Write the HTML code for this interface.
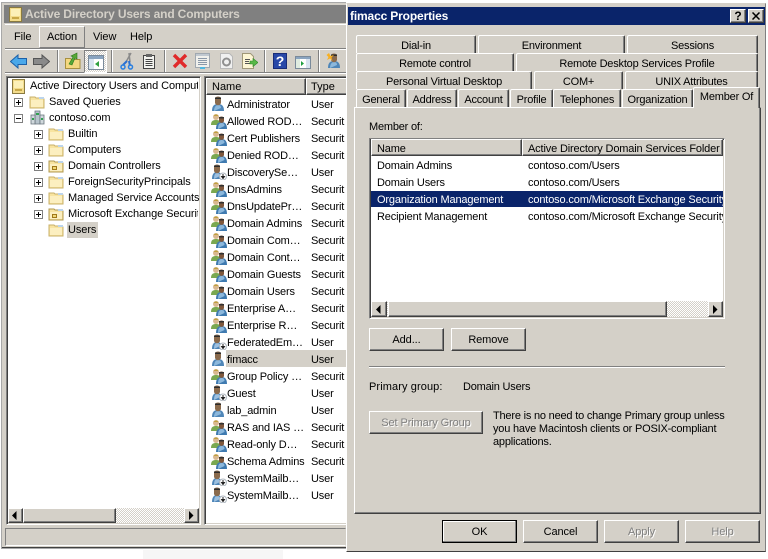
<!DOCTYPE html>
<html><head><meta charset="utf-8"><style>
html,body{margin:0;padding:0;background:#fff}
#p{position:relative;width:768px;height:559px;overflow:hidden;background:#fff;font:11px/13px "Liberation Sans",sans-serif;color:#000}
#p div,#p span,#p svg.a{position:absolute;white-space:nowrap}
.t{line-height:13px}
.g{background:#d4d0c8}
.r{border:1px solid;border-color:#fff #404040 #404040 #fff;box-sizing:border-box;background:#d4d0c8;box-shadow:inset -1px -1px 0 #808080}
.s{border:1px solid;border-color:#808080 #fff #fff #808080;box-sizing:border-box;box-shadow:inset 1px 1px 0 #404040,inset -1px -1px 0 #d4d0c8;background:#fff}
.b{text-align:center;line-height:23px;font-size:11px;letter-spacing:-.1px}
.tab{border:1px solid;border-color:#fff #404040 #d4d0c8 #fff;border-radius:2px 2px 0 0;border-bottom:0;box-shadow:inset -1px 0 0 #808080;box-sizing:border-box;height:18px;text-align:center;line-height:20px;font-size:11px;letter-spacing:-.2px;background:#d4d0c8}
.sep{width:1px;height:22px;background:#808080;box-shadow:1px 0 0 #fff;top:50px}
.tw{font-size:11px;letter-spacing:-.08px;margin-top:1px}
.d{letter-spacing:-.2px}
.dis{color:#808080;text-shadow:1px 1px 0 #fff}
.exp{width:9px;height:9px;border:1px solid #808080;box-sizing:border-box;background:#fff}
.exp:before{content:"";position:absolute;left:1px;top:3px;width:5px;height:1px;background:#000}
.pl:after{content:"";position:absolute;left:3px;top:1px;width:1px;height:5px;background:#000}
.hat{background-color:#fff;background-image:linear-gradient(45deg,#d4d0c8 25%,transparent 25%,transparent 75%,#d4d0c8 75%),linear-gradient(45deg,#d4d0c8 25%,transparent 25%,transparent 75%,#d4d0c8 75%);background-size:2px 2px;background-position:0 0,1px 1px}
.li{font-size:11px;height:17px;line-height:19px;letter-spacing:-.15px}
</style></head><body><div id="p">
<svg width="0" height="0" style="position:absolute"><defs>
<symbol id="f" viewBox="0 0 16 16"><path d="M1 3h5l1 1h7l1 1v9H1z" fill="#f8e4a0" stroke="#c8b06a" stroke-width="1"/><path d="M2 6h12v7H2z" fill="#fcefc0"/><path d="M10 3h5v2h-5z" fill="#bcd4ec"/></symbol>
<symbol id="fo" viewBox="0 0 16 16"><path d="M1 3h5l1 1h7l1 1v9H1z" fill="#f8e4a0" stroke="#b09850" stroke-width="1"/><path d="M2 6h12v7H2z" fill="#fcefc0"/><path d="M10 3h5v2h-5z" fill="#bcd4ec"/><path d="M4 8h5v4H4z" fill="#a07818"/><path d="M5 9h3v2H5z" fill="#f0d878"/></symbol>
<symbol id="u" viewBox="0 0 16 16"><path d="M2 15c0-5 2-7 6-7s6 2 6 7z" fill="#4f86b8"/><path d="M4 15c0-4 2-6 4-6s3 1 3 3z" fill="#8cb8dc"/><path d="M5 2c1-2 5-2 6 0v5c-1 3-5 3-6 0z" fill="#8a6a4c"/><path d="M5 3h6V1.500H5z" fill="#2c2c2c"/></symbol>
<symbol id="uq" viewBox="0 0 16 16"><path d="M1 15c0-5 2-7 5-7s5 2 5 7z" fill="#4f86b8"/><path d="M3 15c0-4 1-6 3-6s3 1 3 3z" fill="#9cc0e0"/><path d="M3 2c1-2 5-2 6 0v5c-1 3-5 3-6 0z" fill="#8a6a4c"/><path d="M3 3h6V1.500H3z" fill="#2c2c2c"/><circle cx="12" cy="12.500" r="3.500" fill="#fff" stroke="#b0b8c0"/><path d="M12 10v3M10.500 12.500l1.500 2 1.500-2z" stroke="#222" fill="#222"/></symbol>
<symbol id="gr" viewBox="0 0 18 16"><circle cx="6" cy="4" r="3" fill="#d8b890"/><path d="M1 12c0-4 2-5 5-5s5 1 5 5z" fill="#7aa850"/><path d="M3.500 3c1-2 4-2 5 0z" fill="#c0a040"/><path d="M6 16c0-5 2-7 5.500-7s5.500 2 5.500 7z" fill="#3f7ab0"/><path d="M8 16c0-4 1-6 3.500-6s3 1 3 3z" fill="#8cb8dc"/><path d="M9 5c.5-2 4.500-2 5 0v3c-.5 2.500-4.500 2.500-5 0z" fill="#80583c"/><path d="M9 5.500h5V4H9z" fill="#333"/></symbol>
</defs></svg>

<!-- main window -->
<div class="g" style="left:1px;top:2px;width:345px;height:547px;border:1px solid #a8a8a8;border-width:1px 0 1px 1px;box-sizing:border-box;box-shadow:inset 0 -1px 0 #404040"></div>
<div style="left:4px;top:5px;width:342px;height:18px;background:#808080"></div>
<svg class="a" style="left:9px;top:7px" width="13" height="15" viewBox="0 0 13 15"><path d="M.5.500h12v14H.5z" fill="#f3dc8c" stroke="#8a7a40"/><path d="M2 2h9v7H2z" fill="#fcf0b8"/><path d="M3 10h7v2H3z" fill="#c8a848"/></svg>
<span class="t" style="left:25px;top:7px;font-size:12px;font-weight:bold;color:#d4d0c8;line-height:15px;letter-spacing:-.15px">Active Directory Users and Computers</span>
<div style="left:5px;top:24px;width:341px;height:1px;background:#fff"></div>
<div style="left:39px;top:26px;width:46px;height:22px;border:1px solid;border-color:#fff #808080 #808080 #fff;box-sizing:border-box"></div>
<span class="tw" style="left:14px;top:30px">File</span>
<span class="tw" style="left:47px;top:30px">Action</span>
<span class="tw" style="left:93px;top:30px">View</span>
<span class="tw" style="left:130px;top:30px">Help</span>
<div style="left:5px;top:48px;width:341px;height:1px;background:#808080;box-shadow:0 1px 0 #fff"></div>
<div style="left:5px;top:72px;width:341px;height:1px;background:#808080;box-shadow:0 1px 0 #fff"></div>
<!-- toolbar -->
<svg class="a" style="left:10px;top:53px" width="17" height="17" viewBox="0 0 17 17"><path d="M.5 8.500 8 2v3.500h8.500v6H8V15z" fill="#4aa8ea" stroke="#1c60a8"/></svg>
<svg class="a" style="left:33px;top:53px" width="17" height="17" viewBox="0 0 17 17"><path d="M16.500 8.500 9 2v3.500H.5v6H9V15z" fill="#8a8a8a" stroke="#555"/></svg>
<div class="sep" style="left:57px"></div>
<svg class="a" style="left:65px;top:52px" width="16" height="18" viewBox="0 0 16 18"><path d="M.5 6.500h5l1 1h8.500v9H.5z" fill="#f4d880" stroke="#a89040"/><path d="M4 12 8 5l-2-1 6-3v6l-2-1-3 7z" fill="#58a838" stroke="#2c7a1c" stroke-width=".6"/></svg>
<div class="hat" style="left:84px;top:50px;width:23px;height:23px;border:1px solid;border-color:#808080 #fff #fff #808080;box-sizing:border-box"></div>
<svg class="a" style="left:88px;top:55px" width="16" height="15" viewBox="0 0 16 15"><path d="M.5.500h15v14H.5z" fill="#fff" stroke="#7a8a9a"/><path d="M1 1h14v3H1z" fill="#8aa4c0"/><path d="M1 4h5v10H1z" fill="#d8e4f0"/><path d="M11 6v6L7 9z" fill="#30a040"/></svg>
<div class="sep" style="left:111px"></div>
<svg class="a" style="left:120px;top:52px" width="14" height="18" viewBox="0 0 14 18"><path d="M11 1 6 10M9 1l1 9" stroke="#8a8a8a" stroke-width="1.500" fill="none"/><path d="M7 9 3 13" stroke="#2a6fd0" stroke-width="2"/><path d="M9 9l1 5" stroke="#2a6fd0" stroke-width="2"/><circle cx="3" cy="15" r="2" fill="none" stroke="#2a7fe0" stroke-width="1.500"/><circle cx="10.500" cy="15" r="2" fill="none" stroke="#2a7fe0" stroke-width="1.500"/></svg>
<svg class="a" style="left:143px;top:53px" width="12" height="16" viewBox="0 0 12 16"><path d="M.5 2.500h11v13H.5z" fill="#f4f4f0" stroke="#444"/><path d="M3 1h6v3H3z" fill="#666"/><path d="M2.500 6.500h7M2.500 8.500h7M2.500 10.500h7M2.500 12.500h7" stroke="#444"/></svg>
<div class="sep" style="left:164px"></div>
<svg class="a" style="left:172px;top:53px" width="16" height="16" viewBox="0 0 16 16"><path d="M2 2l12 12M14 2 2 14" stroke="#e02a2a" stroke-width="3.400"/></svg>
<svg class="a" style="left:195px;top:53px" width="15" height="16" viewBox="0 0 15 16"><path d="M.5.500h14v14H.5z" fill="#f0f0ec" stroke="#a0a8b0"/><path d="M1 1h13v2H1z" fill="#c0c8d0"/><path d="M3 5.500h9M3 7.500h9M3 9.500h9M3 11.500h9" stroke="#8a98a8"/><path d="M5 14h5v2H5z" fill="#50b8e0"/></svg>
<svg class="a" style="left:220px;top:53px" width="13" height="16" viewBox="0 0 13 16"><path d="M.5.500h9l3 3v12H.5z" fill="#f0f0f0" stroke="#b8b8b8"/><circle cx="6.500" cy="9" r="3.500" fill="none" stroke="#909090" stroke-width="2"/></svg>
<svg class="a" style="left:242px;top:53px" width="16" height="16" viewBox="0 0 16 16"><path d="M.5.500h8l3 3v12H.5z" fill="#fdf6d4" stroke="#a09878"/><path d="M3 6.500h5M3 8.500h4M3 10.500h5" stroke="#555"/><path d="M8 8h3V5.500l5 4-5 4V11H8z" fill="#58b848" stroke="#2c8a28" stroke-width=".6"/></svg>
<div class="sep" style="left:264px"></div>
<div style="left:273px;top:53px;width:14px;height:16px;background:#2848a8;border:1px solid #182c78;box-sizing:border-box;color:#fff;font:bold 14px/14px 'Liberation Sans',sans-serif;text-align:center">?</div>
<svg class="a" style="left:295px;top:56px" width="16" height="13" viewBox="0 0 16 13"><path d="M.5.500h15v12H.5z" fill="#fff" stroke="#7a8a9a"/><path d="M1 1h14v2H1z" fill="#8aa4c0"/><path d="M1 3h4v9H1z" fill="#e0ece0"/><path d="M11 3h4v9h-4z" fill="#d8e4f0"/><path d="M6 5v5l3-2.500z" fill="#20a040"/></svg>
<div class="sep" style="left:318px"></div>
<svg class="a" style="left:326px;top:52px" width="16" height="18"><use href="#u" width="16" height="18"/><path d="M3 1 4.500 4 8 3 5.500 5.500 6.500 9 4 6.500 1 8 2.500 5 .5 3z" fill="#f8b020"/></svg>

<!-- tree -->
<div class="s" style="left:6px;top:76px;width:195px;height:449px"></div>
<svg class="a" style="left:12px;top:79px" width="13" height="15" viewBox="0 0 13 15"><path d="M.5.500h12v14H.5z" fill="#f3dc8c" stroke="#8a7a40"/><path d="M2 2h9v7H2z" fill="#fcf0b8"/><path d="M3 10h7v2H3z" fill="#c8a848"/></svg>
<span class="tw" style="left:30px;top:79px;width:168px;overflow:hidden">Active Directory Users and Computers</span>
<div class="exp pl" style="left:14px;top:98px"></div><svg class="a" style="left:29px;top:94px" width="16" height="16"><use href="#f"/></svg><span class="tw" style="left:49px;top:95px">Saved Queries</span>
<div class="exp" style="left:14px;top:114px"></div>
<svg class="a" style="left:30px;top:110px" width="15" height="15" viewBox="0 0 15 15"><path d="M5 1h5v13H5z" fill="#b8c4cc" stroke="#68747c" stroke-width=".8"/><path d="M1 5h4v9H1zM10 5h4v9h-4z" fill="#d0d8dc" stroke="#68747c" stroke-width=".8"/><path d="M6 3h3v2H6zM2 8h2v2H2zM11 8h2v2h-2z" fill="#30a050"/></svg>
<span class="tw" style="left:49px;top:111px">contoso.com</span>
<div class="exp pl" style="left:34px;top:130px"></div><svg class="a" style="left:48px;top:126px" width="16" height="16"><use href="#f"/></svg><span class="tw" style="left:68px;top:127px">Builtin</span>
<div class="exp pl" style="left:34px;top:146px"></div><svg class="a" style="left:48px;top:142px" width="16" height="16"><use href="#f"/></svg><span class="tw" style="left:68px;top:143px">Computers</span>
<div class="exp pl" style="left:34px;top:162px"></div><svg class="a" style="left:48px;top:158px" width="16" height="16"><use href="#fo"/></svg><span class="tw" style="left:68px;top:159px">Domain Controllers</span>
<div class="exp pl" style="left:34px;top:178px"></div><svg class="a" style="left:48px;top:174px" width="16" height="16"><use href="#f"/></svg><span class="tw" style="left:68px;top:175px">ForeignSecurityPrincipals</span>
<div class="exp pl" style="left:34px;top:194px"></div><svg class="a" style="left:48px;top:190px" width="16" height="16"><use href="#f"/></svg><span class="tw" style="left:68px;top:191px">Managed Service Accounts</span>
<div class="exp pl" style="left:34px;top:210px"></div><svg class="a" style="left:48px;top:206px" width="16" height="16"><use href="#fo"/></svg><span class="tw" style="left:68px;top:207px;width:130px;overflow:hidden">Microsoft Exchange Security Groups</span>
<svg class="a" style="left:48px;top:222px" width="16" height="16"><use href="#f"/></svg>
<div class="g" style="left:67px;top:222px;width:31px;height:16px"></div><span class="tw" style="left:68px;top:223px">Users</span>
<!-- tree scrollbar -->
<div class="hat" style="left:8px;top:508px;width:191px;height:15px"></div>
<div class="r" style="left:8px;top:508px;width:15px;height:15px"></div><svg class="a" style="left:12px;top:511px" width="5" height="9"><path d="M4.500 0v9L0 4.500z"/></svg>
<div class="r" style="left:23px;top:508px;width:93px;height:15px"></div>
<div class="r" style="left:184px;top:508px;width:15px;height:15px"></div><svg class="a" style="left:189px;top:511px" width="5" height="9"><path d="M0 0v9l4.500-4.500z"/></svg>

<!-- list -->
<div class="s" style="left:204px;top:76px;width:145px;height:449px"></div>
<div class="r" style="left:206px;top:78px;width:100px;height:17px;line-height:17px;font-size:11px;padding-left:5px">Name</div>
<div class="r" style="left:306px;top:78px;width:42px;height:17px;line-height:17px;font-size:11px;padding-left:4px">Type</div>
<div class="g" style="left:226px;top:350px;width:120px;height:17px"></div>

<svg class="a" style="left:210px;top:96px" width="16" height="16"><use href="#u"/></svg><span class="li" style="left:227px;top:96px">Administrator</span><span class="li" style="left:311px;top:96px">User</span>
<svg class="a" style="left:210px;top:113px" width="18" height="16"><use href="#gr"/></svg><span class="li" style="left:227px;top:113px">Allowed ROD…</span><span class="li" style="left:311px;top:113px">Securit</span>
<svg class="a" style="left:210px;top:130px" width="18" height="16"><use href="#gr"/></svg><span class="li" style="left:227px;top:130px">Cert Publishers</span><span class="li" style="left:311px;top:130px">Securit</span>
<svg class="a" style="left:210px;top:147px" width="18" height="16"><use href="#gr"/></svg><span class="li" style="left:227px;top:147px">Denied ROD…</span><span class="li" style="left:311px;top:147px">Securit</span>
<svg class="a" style="left:211px;top:164px" width="16" height="16"><use href="#uq"/></svg><span class="li" style="left:227px;top:164px">DiscoverySe…</span><span class="li" style="left:311px;top:164px">User</span>
<svg class="a" style="left:210px;top:181px" width="18" height="16"><use href="#gr"/></svg><span class="li" style="left:227px;top:181px">DnsAdmins</span><span class="li" style="left:311px;top:181px">Securit</span>
<svg class="a" style="left:210px;top:198px" width="18" height="16"><use href="#gr"/></svg><span class="li" style="left:227px;top:198px">DnsUpdatePr…</span><span class="li" style="left:311px;top:198px">Securit</span>
<svg class="a" style="left:210px;top:215px" width="18" height="16"><use href="#gr"/></svg><span class="li" style="left:227px;top:215px">Domain Admins</span><span class="li" style="left:311px;top:215px">Securit</span>
<svg class="a" style="left:210px;top:232px" width="18" height="16"><use href="#gr"/></svg><span class="li" style="left:227px;top:232px">Domain Com…</span><span class="li" style="left:311px;top:232px">Securit</span>
<svg class="a" style="left:210px;top:249px" width="18" height="16"><use href="#gr"/></svg><span class="li" style="left:227px;top:249px">Domain Cont…</span><span class="li" style="left:311px;top:249px">Securit</span>
<svg class="a" style="left:210px;top:266px" width="18" height="16"><use href="#gr"/></svg><span class="li" style="left:227px;top:266px">Domain Guests</span><span class="li" style="left:311px;top:266px">Securit</span>
<svg class="a" style="left:210px;top:283px" width="18" height="16"><use href="#gr"/></svg><span class="li" style="left:227px;top:283px">Domain Users</span><span class="li" style="left:311px;top:283px">Securit</span>
<svg class="a" style="left:210px;top:300px" width="18" height="16"><use href="#gr"/></svg><span class="li" style="left:227px;top:300px">Enterprise A…</span><span class="li" style="left:311px;top:300px">Securit</span>
<svg class="a" style="left:210px;top:317px" width="18" height="16"><use href="#gr"/></svg><span class="li" style="left:227px;top:317px">Enterprise R…</span><span class="li" style="left:311px;top:317px">Securit</span>
<svg class="a" style="left:211px;top:334px" width="16" height="16"><use href="#uq"/></svg><span class="li" style="left:227px;top:334px">FederatedEm…</span><span class="li" style="left:311px;top:334px">User</span>
<svg class="a" style="left:210px;top:351px" width="16" height="16"><use href="#u"/></svg><span class="li" style="left:227px;top:351px">fimacc</span><span class="li" style="left:311px;top:351px">User</span>
<svg class="a" style="left:210px;top:368px" width="18" height="16"><use href="#gr"/></svg><span class="li" style="left:227px;top:368px">Group Policy …</span><span class="li" style="left:311px;top:368px">Securit</span>
<svg class="a" style="left:211px;top:385px" width="16" height="16"><use href="#uq"/></svg><span class="li" style="left:227px;top:385px">Guest</span><span class="li" style="left:311px;top:385px">User</span>
<svg class="a" style="left:210px;top:402px" width="16" height="16"><use href="#u"/></svg><span class="li" style="left:227px;top:402px">lab_admin</span><span class="li" style="left:311px;top:402px">User</span>
<svg class="a" style="left:210px;top:419px" width="18" height="16"><use href="#gr"/></svg><span class="li" style="left:227px;top:419px">RAS and IAS …</span><span class="li" style="left:311px;top:419px">Securit</span>
<svg class="a" style="left:210px;top:436px" width="18" height="16"><use href="#gr"/></svg><span class="li" style="left:227px;top:436px">Read-only D…</span><span class="li" style="left:311px;top:436px">Securit</span>
<svg class="a" style="left:210px;top:453px" width="18" height="16"><use href="#gr"/></svg><span class="li" style="left:227px;top:453px">Schema Admins</span><span class="li" style="left:311px;top:453px">Securit</span>
<svg class="a" style="left:211px;top:470px" width="16" height="16"><use href="#uq"/></svg><span class="li" style="left:227px;top:470px">SystemMailb…</span><span class="li" style="left:311px;top:470px">User</span>
<svg class="a" style="left:211px;top:487px" width="16" height="16"><use href="#uq"/></svg><span class="li" style="left:227px;top:487px">SystemMailb…</span><span class="li" style="left:311px;top:487px">User</span>

<!-- status -->
<div style="left:5px;top:528px;width:341px;height:18px;border:1px solid;border-color:#808080 #d4d0c8 #fff #808080;box-sizing:border-box"></div>
<div style="left:143px;top:550px;width:140px;height:9px;background:#f6f6f6"></div>

<!-- dialog -->
<div class="g" style="left:346px;top:3px;width:420px;height:549px;border:1px solid;border-color:#d4d0c8 #808080 #404040 #fff;box-sizing:border-box"></div>
<div style="left:348px;top:7px;width:417px;height:18px;background:#0a246a"></div>
<span style="left:350px;top:8px;font:bold 12px/16px 'Liberation Sans',sans-serif;color:#fff;letter-spacing:-.15px">fimacc Properties</span>
<div class="r" style="left:730px;top:9px;width:16px;height:14px;font:bold 12px/12px 'Liberation Sans',sans-serif;text-align:center">?</div>
<div class="r" style="left:748px;top:9px;width:16px;height:14px"></div>
<svg class="a" style="left:752px;top:12px" width="8" height="8" viewBox="0 0 8 8"><path d="M.5.500l7 7M7.500.500l-7 7" stroke="#000" stroke-width="1.500"/></svg>

<div class="tab" style="left:356px;top:35px;width:120px">Dial-in</div>
<div class="tab" style="left:478px;top:35px;width:147px">Environment</div>
<div class="tab" style="left:627px;top:35px;width:131px">Sessions</div>
<div class="tab" style="left:356px;top:53px;width:158px">Remote control</div>
<div class="tab" style="left:516px;top:53px;width:242px">Remote Desktop Services Profile</div>
<div class="tab" style="left:356px;top:71px;width:176px">Personal Virtual Desktop</div>
<div class="tab" style="left:534px;top:71px;width:89px">COM+</div>
<div class="tab" style="left:625px;top:71px;width:133px">UNIX Attributes</div>
<div class="tab" style="left:356px;top:89px;width:50px">General</div>
<div class="tab" style="left:407px;top:89px;width:50px">Address</div>
<div class="tab" style="left:458px;top:89px;width:51px">Account</div>
<div class="tab" style="left:510px;top:89px;width:43px">Profile</div>
<div class="tab" style="left:553px;top:89px;width:68px">Telephones</div>
<div class="tab" style="left:622px;top:89px;width:71px">Organization</div>
<div style="left:354px;top:107px;width:407px;height:407px;border:1px solid;border-color:#fff #404040 #404040 #fff;box-sizing:border-box;box-shadow:inset -1px -1px 0 #808080;background:#d4d0c8"></div>
<div class="tab" style="left:693px;top:87px;width:67px;height:21px;line-height:19px;border-bottom:0;z-index:2">Member Of</div>

<span class="tw d" style="left:369px;top:120px">Member of:</span>
<div class="s" style="left:369px;top:138px;width:356px;height:181px"></div>
<div class="r" style="left:371px;top:139px;width:151px;height:17px;line-height:18px;font-size:11px;padding-left:5px;letter-spacing:-.15px">Name</div>
<div class="r" style="left:522px;top:139px;width:201px;height:17px;line-height:18px;font-size:11px;padding-left:5px;overflow:hidden;letter-spacing:-.15px">Active Directory Domain Services Folder</div>
<span class="li" style="left:377px;top:157px">Domain Admins</span><span class="li" style="left:528px;top:157px">contoso.com/Users</span>
<span class="li" style="left:377px;top:174px">Domain Users</span><span class="li" style="left:528px;top:174px">contoso.com/Users</span>
<div class="li" style="left:371px;top:191px;width:352px;height:16px;line-height:18px;background:#0a246a;color:#fff;overflow:hidden"><span style="left:6px;top:0">Organization Management</span><span style="left:157px;top:0">contoso.com/Microsoft Exchange Security Groups</span></div>
<span class="li" style="left:377px;top:208px">Recipient Management</span><span class="li" style="left:528px;top:208px;width:195px;overflow:hidden">contoso.com/Microsoft Exchange Security Groups</span>
<div class="hat" style="left:371px;top:301px;width:352px;height:16px"></div>
<div class="r" style="left:371px;top:301px;width:16px;height:16px"></div><svg class="a" style="left:376px;top:305px" width="5" height="9"><path d="M4.500 0v9L0 4.500z"/></svg>
<div class="r" style="left:388px;top:301px;width:279px;height:16px"></div>
<div class="r" style="left:708px;top:301px;width:15px;height:16px"></div><svg class="a" style="left:713px;top:305px" width="5" height="9"><path d="M0 0v9l4.500-4.500z"/></svg>

<div class="r b" style="left:369px;top:328px;width:75px;height:23px">Add...</div>
<div class="r b" style="left:451px;top:328px;width:75px;height:23px">Remove</div>
<div style="left:369px;top:366px;width:356px;height:1px;background:#808080;box-shadow:0 1px 0 #fff"></div>
<span class="tw" style="left:369px;top:380px;letter-spacing:.1px">Primary group:</span>
<span class="tw" style="left:463px;top:380px;letter-spacing:-.2px">Domain Users</span>
<div class="r b dis" style="left:369px;top:411px;width:114px;height:23px">Set Primary Group</div>
<span class="tw d" style="left:493px;top:409px">There is no need to change Primary group unless</span>
<span class="tw d" style="left:493px;top:422px">you have Macintosh clients or POSIX-compliant</span>
<span class="tw d" style="left:493px;top:435px">applications.</span>

<div class="r b" style="left:442px;top:520px;width:75px;height:23px;border-color:#000;box-shadow:inset -1px -1px 0 #808080,inset 1px 1px 0 #fff">OK</div>
<div class="r b" style="left:523px;top:520px;width:75px;height:23px">Cancel</div>
<div class="r b dis" style="left:604px;top:520px;width:75px;height:23px">Apply</div>
<div class="r b dis" style="left:685px;top:520px;width:75px;height:23px">Help</div>
</div></body></html>
